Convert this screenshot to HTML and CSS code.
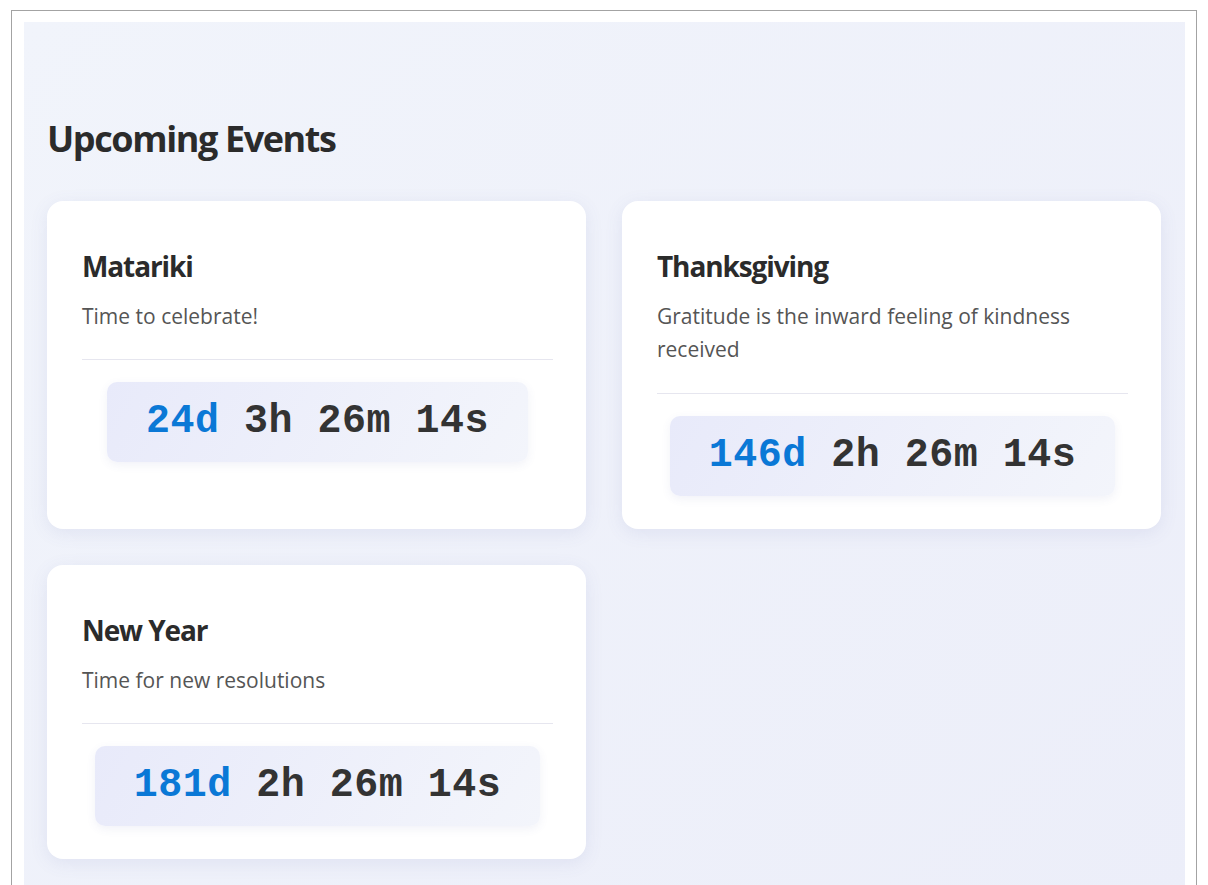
FILE: index.html
```html
<!DOCTYPE html>
<html lang="en">
<head>
<meta charset="utf-8">
<title>Upcoming Events</title>
<link rel="stylesheet" href="styles.css">
</head>
<body>
<div class="frame">
  <main class="panel">
    <h1 class="heading">Upcoming Events</h1>
    <div class="grid">
      <section class="card">
        <h3 class="card-title">Matariki</h3>
        <p class="card-desc">Time to celebrate!</p>
        <div class="card-footer">
          <div class="countdown"><span class="days">24d</span> 3h 26m 14s</div>
        </div>
      </section>
      <section class="card">
        <h3 class="card-title">Thanksgiving</h3>
        <p class="card-desc">Gratitude is the inward feeling of kindness received</p>
        <div class="card-footer">
          <div class="countdown"><span class="days">146d</span> 2h 26m 14s</div>
        </div>
      </section>
      <section class="card">
        <h3 class="card-title">New Year</h3>
        <p class="card-desc">Time for new resolutions</p>
        <div class="card-footer">
          <div class="countdown"><span class="days">181d</span> 2h 26m 14s</div>
        </div>
      </section>
    </div>
  </main>
</div>
</body>
</html>
```

FILE: styles.css
```css
* { box-sizing: border-box; }

html, body { height: 100%; }

body {
  margin: 0;
  padding: 10px 11px 0;
  background: #ffffff;
  font-family: "Open Sans", "Noto Sans", sans-serif;
  color: #2b2b2b;
  overflow: hidden;
}

.frame {
  border: 1px solid #a3a3a3;
  border-bottom: none;
  padding: 11px 11px 0 12px;
  min-height: 100%;
}

.panel {
  background: linear-gradient(135deg, #f1f4fb 0%, #eceef9 100%);
  padding: 24px 23px 40px;
  min-height: 900px;
}

.heading {
  margin: 71px 0 41px;
  font-size: 36px;
  line-height: 1.2;
  font-weight: 700;
  letter-spacing: -1.4px;
  color: #2b2b2b;
}

.grid {
  display: grid;
  grid-template-columns: 539px 539px;
  column-gap: 36px;
  row-gap: 36px;
}

.card {
  background: #ffffff;
  border-radius: 16px;
  padding: 34px 33px 33px 35px;
  box-shadow: 0 4px 18px rgba(90, 100, 170, 0.10);
}

.card-title {
  margin: 15px 0 16px;
  font-size: 28px;
  line-height: 1.2;
  font-weight: 700;
  letter-spacing: -1.1px;
  color: #2b2b2b;
}

.card-desc {
  margin: 0;
  font-size: 21px;
  line-height: 1.6;
  color: #555555;
}

.card-footer {
  margin-top: 26px;
  border-top: 1px solid #e6e6ef;
  padding-top: 22px;
  text-align: center;
}

.countdown {
  display: inline-block;
  padding: 16px 39px;
  border-radius: 10px;
  background: linear-gradient(120deg, #e8eafa 0%, #f3f5fb 100%);
  box-shadow: 0 3px 10px rgba(80, 90, 160, 0.08);
  font-family: "Liberation Mono", "Courier New", monospace;
  font-weight: 700;
  font-size: 40px;
  line-height: 48px;
  letter-spacing: 0.5px;
  color: #333333;
  white-space: nowrap;
}

.days { color: #0a78d6; }
```
